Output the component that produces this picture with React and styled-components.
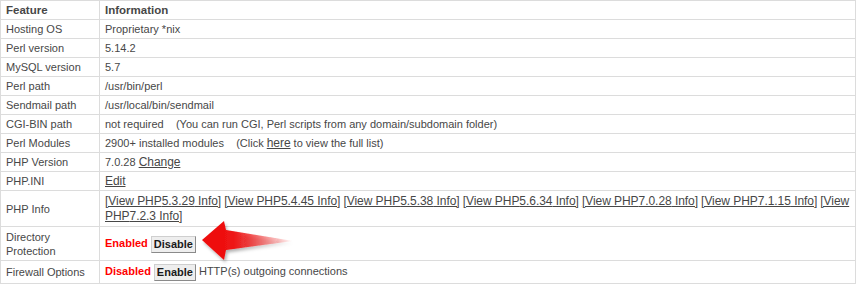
import React from 'react';
import styled, { createGlobalStyle } from 'styled-components';

const GlobalStyle = createGlobalStyle`
  body {
    margin: 0;
    background: #fff;
    font-family: "Liberation Sans", Arial, sans-serif;
  }
`

const Table = styled.table`
  width: 856px;
  border-collapse: collapse;
  border: 1px solid #dcdcdc;
  font-size: 11px;
  color: #474747;
`

const Row = styled.tr``

const Head = styled.th`
  text-align: left;
  font-weight: bold;
  font-size: 11.5px;
  line-height: 13px;
  padding: 3px 2px 2px 5px;
  border: 1px solid #dcdcdc;
  color: #474747;
  width: ${p => p.$w || 'auto'};
`

const Cell = styled.td`
  position: relative;
  padding: 3px 2px 2px 5px;
  line-height: ${p => p.$lh || '13px'};
  border: 1px solid #dcdcdc;
  vertical-align: middle;
`

const Link = styled.a`
  color: #474747;
  font-size: 12px;
  letter-spacing: -0.05px;
  text-decoration: underline;
  cursor: pointer;
`

const Note = styled.span`
  white-space: pre;
`

const Status = styled.span`
  color: #ff0000;
  font-weight: bold;
  font-size: 11px;
  margin-right: 3px;
`

const Button = styled.button`
  font-family: "Liberation Sans", Arial, sans-serif;
  font-size: 11px;
  font-weight: bold;
  color: #1a1a1a;
  background: #eeeeee;
  border: 1px solid #cfcfcf;
  border-right-color: #8a8a8a;
  border-bottom-color: #8a8a8a;
  padding: 1px 2px;
  margin: 0 3px 0 0;
  line-height: 13px;
  vertical-align: middle;
`

const Arrow = styled.svg`
  position: absolute;
  left: 97px;
  top: -11px;
  pointer-events: none;
`

const simpleRows = [
  ['Hosting OS', 'Proprietary *nix'],
  ['Perl version', '5.14.2'],
  ['MySQL version', '5.7'],
  ['Perl path', '/usr/bin/perl'],
  ['Sendmail path', '/usr/local/bin/sendmail'],
]

const phpInfo = ['5.3.29', '5.4.45', '5.5.38', '5.6.34', '7.0.28', '7.1.15', '7.2.3']

function PointerArrow() {
  return (
    <Arrow width="100" height="52" viewBox="0 0 100 52">
      <defs>
        <linearGradient id="arrowFill" x1="0" y1="0" x2="1" y2="0">
          <stop offset="0" stopColor="#ee0a0a" />
          <stop offset="0.35" stopColor="#ee1414" />
          <stop offset="1" stopColor="#ee1414" stopOpacity="0" />
        </linearGradient>
        <filter id="arrowShadow" x="-20%" y="-20%" width="140%" height="150%">
          <feDropShadow dx="1.5" dy="2.5" stdDeviation="1.5" floodColor="#000" floodOpacity="0.3" />
        </filter>
      </defs>
      <path
        d="M5 24 L27 5 L29 14 L96 25 L29 34 L27 44 Z"
        fill="url(#arrowFill)"
        filter="url(#arrowShadow)"
      />
    </Arrow>
  )
}

export default function App() {
  return (
    <>
      <GlobalStyle />
      <Table>
        <tbody>
          <Row>
            <Head $w="91px">Feature</Head>
            <Head>Information</Head>
          </Row>
          {simpleRows.map(([k, v]) => (
            <Row key={k}>
              <Cell>{k}</Cell>
              <Cell>{v}</Cell>
            </Row>
          ))}
          <Row>
            <Cell>CGI-BIN path</Cell>
            <Cell>
              <Note>{'not required    (You can run CGI, Perl scripts from any domain/subdomain folder)'}</Note>
            </Cell>
          </Row>
          <Row>
            <Cell>Perl Modules</Cell>
            <Cell>
              <Note>{'2900+ installed modules    (Click '}</Note>
              <Link>here</Link>
              <Note>{' to view the full list)'}</Note>
            </Cell>
          </Row>
          <Row>
            <Cell>PHP Version</Cell>
            <Cell>
              7.0.28 <Link>Change</Link>
            </Cell>
          </Row>
          <Row>
            <Cell>PHP.INI</Cell>
            <Cell>
              <Link>Edit</Link>
            </Cell>
          </Row>
          <Row>
            <Cell>PHP Info</Cell>
            <Cell $lh="15px">
              {phpInfo.map((v, i) => (
                <React.Fragment key={v}>
                  <Link>[View PHP{v} Info]</Link>
                  {i < phpInfo.length - 1 ? ' ' : null}
                </React.Fragment>
              ))}
            </Cell>
          </Row>
          <Row>
            <Cell $lh="14px">Directory<br />Protection</Cell>
            <Cell>
              <Status>Enabled</Status>
              <Button>Disable</Button>
              <PointerArrow />
            </Cell>
          </Row>
          <Row>
            <Cell>Firewall Options</Cell>
            <Cell>
              <Status>Disabled</Status>
              <Button>Enable</Button>
              HTTP(s) outgoing connections
            </Cell>
          </Row>
        </tbody>
      </Table>
    </>
  )
}
